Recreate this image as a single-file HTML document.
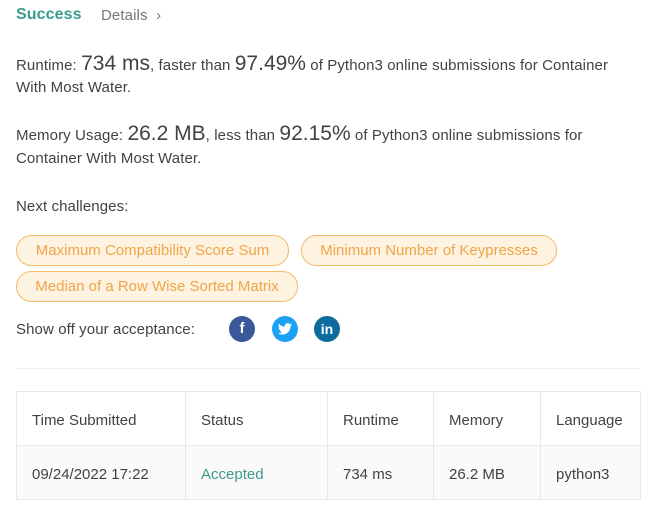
<!DOCTYPE html>
<html><head><meta charset="utf-8"><style>
body{margin:0;width:652px;height:522px;background:#fff;font-family:"Liberation Sans",sans-serif;color:#424242;position:relative;overflow:hidden}
.a{position:absolute;white-space:nowrap;font-size:15px;line-height:20px;letter-spacing:0.1px}
.big{font-size:21px;letter-spacing:0}
.pill{position:absolute;height:29px;border:1px solid #f2bb6a;background:#fef2e0;color:#f0a54a;border-radius:16px;font-size:15px;line-height:30px;text-align:center;box-sizing:content-box;white-space:nowrap}
.ic{position:absolute;top:316px;width:26px;height:26px;border-radius:50%;color:#fff;font-weight:bold;text-align:center;line-height:26px;font-size:15px}
table{position:absolute;left:16px;top:391px;width:624px;border-collapse:collapse;font-size:15px;table-layout:fixed}
td{border:1px solid #e8e8e8;padding:3px 0 0 15px;height:50px;color:#424242;white-space:nowrap}
tr.r2 td{background:#fafafa}
</style></head><body>
<div class="a" style="left:16px;top:5px;font-size:16px;font-weight:bold;color:#3a9b8b">Success</div>
<div class="a" style="left:101px;top:6px;font-size:15px;color:#777">Details &nbsp;›</div>
<div class="a" style="left:16px;top:54px">Runtime: <span class="big">734 ms</span>, faster than <span class="big">97.49%</span> of Python3 online submissions for Container</div>
<div class="a" style="left:16px;top:78px">With Most Water.</div>
<div class="a" style="left:16px;top:124px">Memory Usage: <span class="big">26.2 MB</span>, less than <span class="big">92.15%</span> of Python3 online submissions for</div>
<div class="a" style="left:16px;top:149px">Container With Most Water.</div>
<div class="a" style="left:16px;top:197px">Next challenges:</div>
<div class="pill" style="left:16px;top:235px;width:271px">Maximum Compatibility Score Sum</div>
<div class="pill" style="left:301px;top:235px;width:254px">Minimum Number of Keypresses</div>
<div class="pill" style="left:16px;top:271px;width:280px">Median of a Row Wise Sorted Matrix</div>
<div class="a" style="left:16px;top:320px">Show off your acceptance:</div>
<div class="ic" style="left:229px;background:#3b5998">f</div>
<div class="ic" style="left:272px;background:#1da1f2"><svg width="14" height="12" viewBox="0 0 24 20" style="margin-top:7px"><path fill="#fff" d="M24 2.4a10 10 0 0 1-2.8.8A5 5 0 0 0 23.3.4a10 10 0 0 1-3.1 1.2A4.9 4.9 0 0 0 11.8 6 14 14 0 0 1 1.7.9a4.9 4.9 0 0 0 1.5 6.6A4.9 4.9 0 0 1 1 6.9a4.9 4.9 0 0 0 3.9 4.8 5 5 0 0 1-2.2.1 4.9 4.9 0 0 0 4.6 3.4A9.9 9.9 0 0 1 0 17.2 14 14 0 0 0 7.5 19.4c9.1 0 14-7.5 14-14v-.6A10 10 0 0 0 24 2.4z"/></svg></div>
<div class="ic" style="left:314px;background:#0e6b9e;font-size:14px">in</div>
<div style="position:absolute;left:16px;top:368px;width:624px;height:1px;background:#eee"></div>
<table>
<colgroup><col style="width:169px"><col style="width:142px"><col style="width:106px"><col style="width:107px"><col style="width:100px"></colgroup>
<tr><td>Time Submitted</td><td>Status</td><td>Runtime</td><td>Memory</td><td>Language</td></tr>
<tr class="r2"><td>09/24/2022 17:22</td><td style="color:#3a9b8b">Accepted</td><td>734 ms</td><td>26.2 MB</td><td>python3</td></tr>
</table>
</body></html>
